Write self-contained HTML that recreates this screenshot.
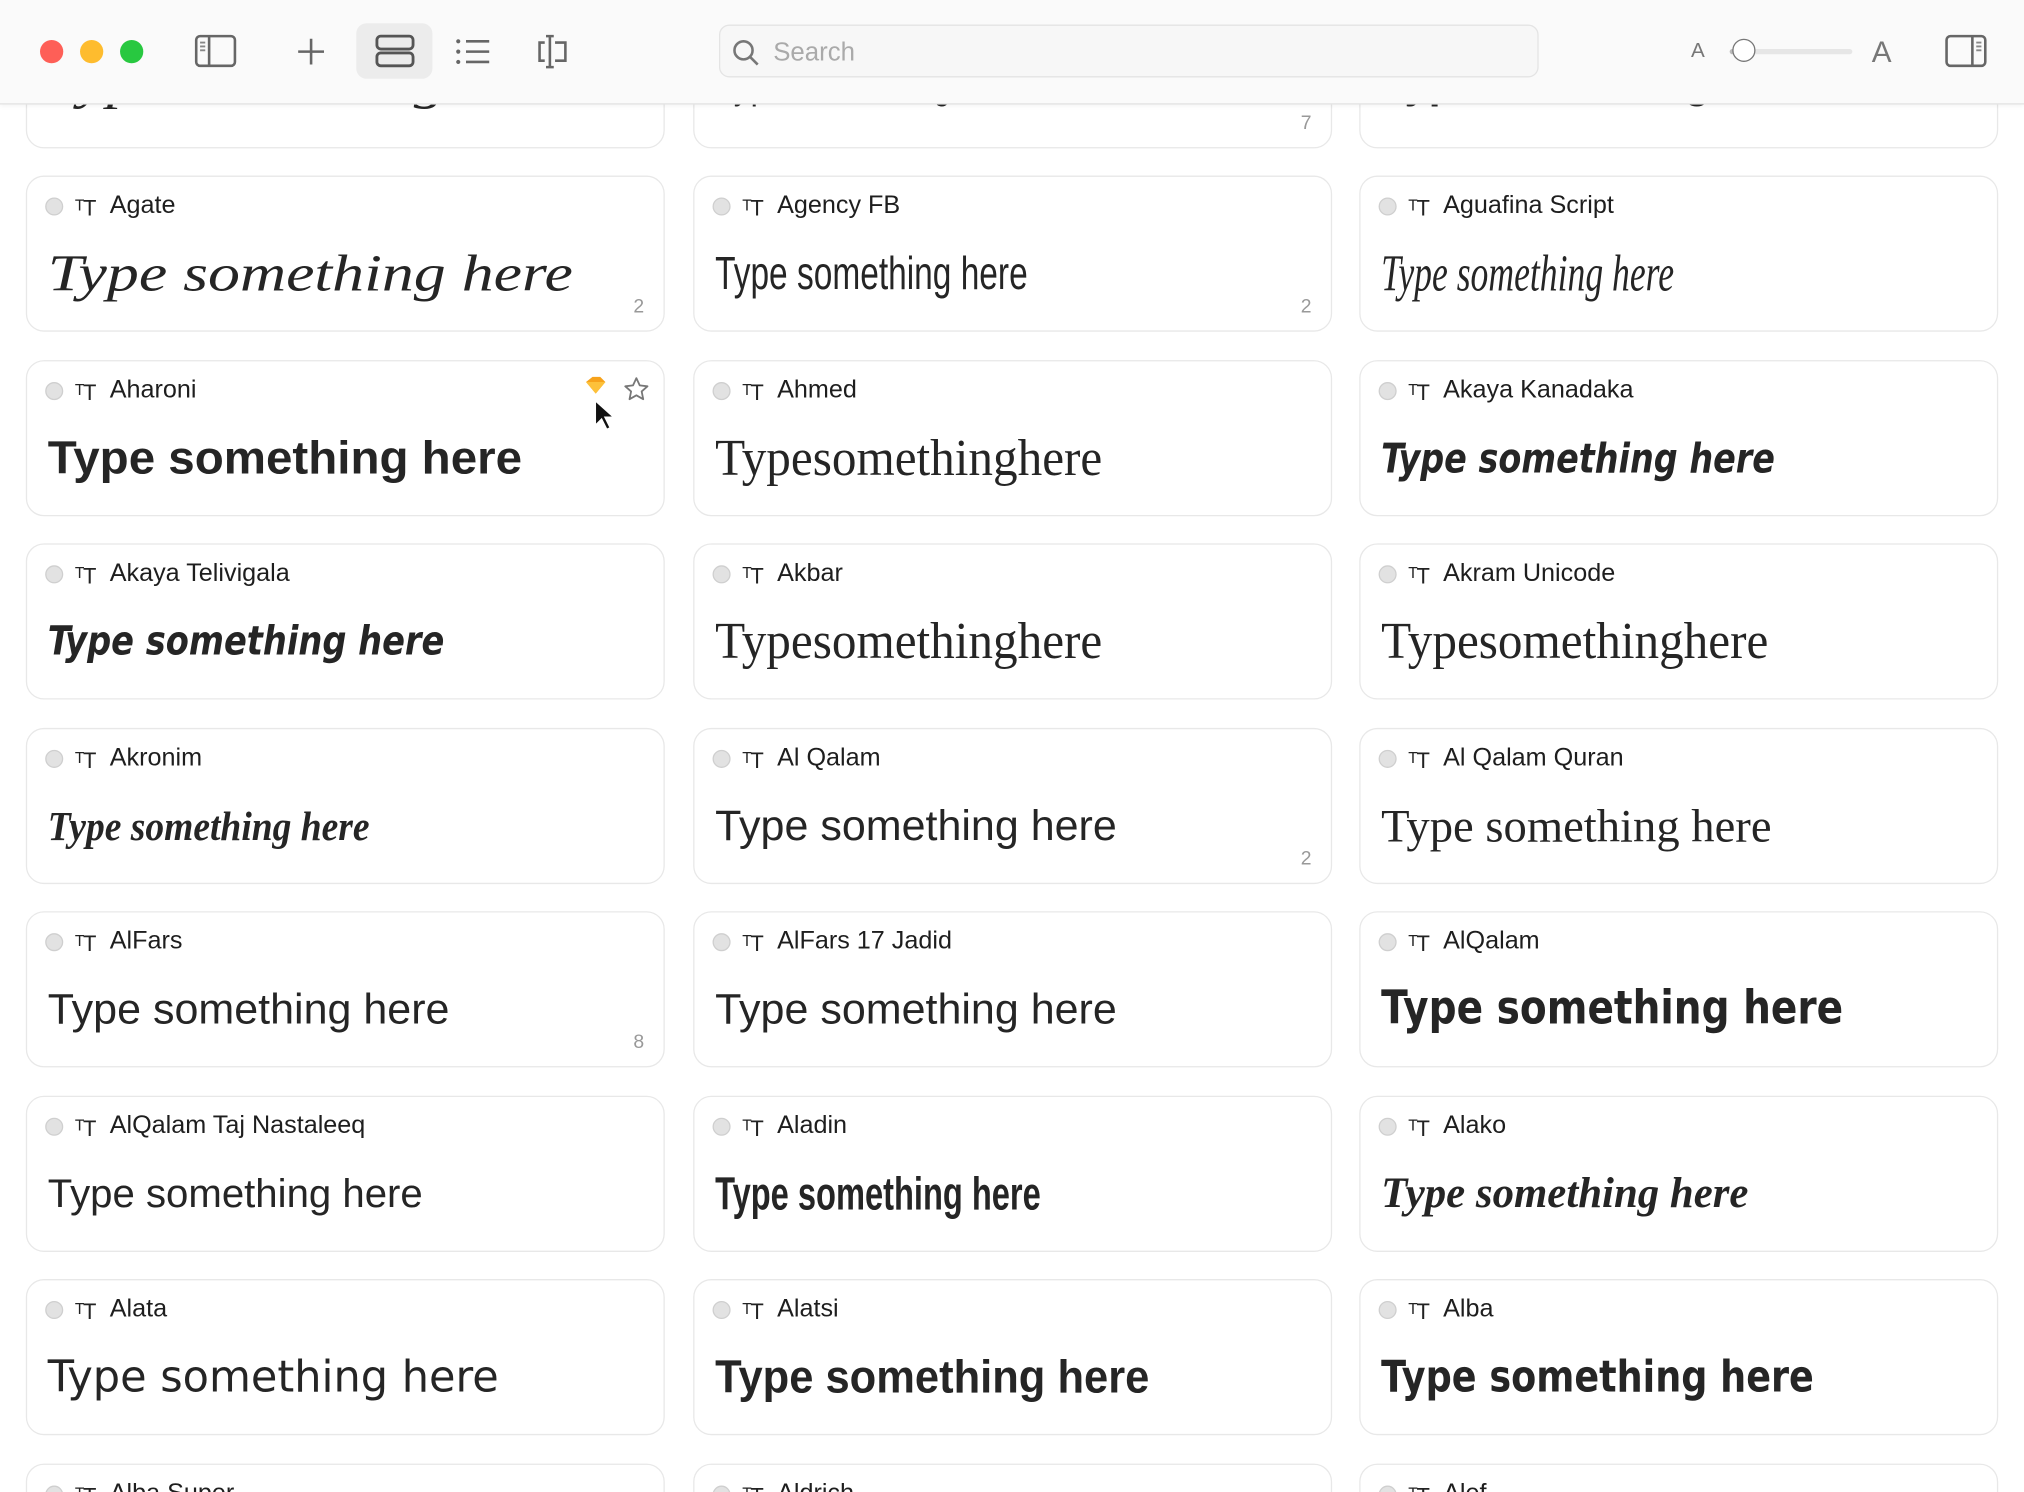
<!DOCTYPE html>
<html><head><meta charset="utf-8"><style>
html,body{margin:0;padding:0;width:2024px;height:1492px;overflow:hidden;background:#fff}
#w{position:absolute;left:0;top:0;width:1568px;height:1156px;transform:scale(1.29082,1.29066);transform-origin:0 0;overflow:hidden;font-family:"Liberation Sans",sans-serif}
.tb{position:absolute;left:0;top:0;width:1568px;height:80px;background:#fafafa;border-bottom:1px solid #e2e2e2;box-shadow:0 1px 4px rgba(0,0,0,.06);z-index:10}
.tl{position:absolute;top:31px;width:18px;height:18px;border-radius:50%}
.card{position:absolute;width:495px;height:121px;border:1px solid #e8e8e8;border-radius:14px;background:#fff;box-sizing:border-box}
.dot{position:absolute;left:14px;top:16px;width:14px;height:14px;border-radius:50%;background:#e2e2e2;border:1px solid #cfcfcf;box-sizing:border-box}
.ic{position:absolute;left:37px;top:12px;font-size:17px;color:#222;line-height:20px}
.ic b{font-weight:normal;font-size:12px;vertical-align:4px;margin-right:-1px}
.nm{position:absolute;left:64px;top:11px;font-size:19.5px;color:#1e1e1e}
.s{position:absolute;left:16px;top:50px;line-height:50px;white-space:nowrap;color:#252525;transform-origin:0 50%}
.n{position:absolute;right:15px;top:92px;font-size:15px;color:#999}
</style></head><body><div id="w">
<div class="tb">
<div class="tl" style="left:31px;background:#fe5f57;"></div>
<div class="tl" style="left:62px;background:#febc2e;"></div>
<div class="tl" style="left:93px;background:#28c840;"></div>
<svg style="position:absolute;left:150px;top:26px" width="34" height="28" viewBox="0 0 34 28"><rect x="2" y="2" width="30" height="23" rx="3" fill="none" stroke="#666" stroke-width="2"/><line x1="12" y1="2" x2="12" y2="25" stroke="#666" stroke-width="2"/><line x1="5" y1="7" x2="9" y2="7" stroke="#888" stroke-width="1.5"/><line x1="5" y1="10" x2="9" y2="10" stroke="#888" stroke-width="1.5"/><line x1="5" y1="13" x2="9" y2="13" stroke="#888" stroke-width="1.5"/></svg>
<svg style="position:absolute;left:229px;top:28px" width="24" height="24"><path d="M12 2v20M2 12h20" stroke="#666" stroke-width="2"/></svg>
<div style="position:absolute;left:276px;top:18px;width:59px;height:43px;border-radius:8px;background:#ececec"></div>
<svg style="position:absolute;left:290px;top:26px" width="32" height="28"><rect x="2" y="2" width="28" height="10" rx="3" fill="none" stroke="#555" stroke-width="2.2"/><rect x="2" y="15" width="28" height="10" rx="3" fill="none" stroke="#555" stroke-width="2.2"/></svg>
<svg style="position:absolute;left:352px;top:28px" width="30" height="24"><g fill="#666"><circle cx="3" cy="4" r="1.6"/><circle cx="3" cy="12" r="1.6"/><circle cx="3" cy="20" r="1.6"/></g><g stroke="#666" stroke-width="2"><path d="M9 4h18M9 12h18M9 20h18"/></g></svg>
<svg style="position:absolute;left:414px;top:26px" width="30" height="28"><path d="M12 2v24M9 2h6M9 26h6M8 7H4v14h4M16 7h8v14h-8" fill="none" stroke="#666" stroke-width="2"/></svg>
<div style="position:absolute;left:557px;top:19px;width:635px;height:41px;border:1px solid #e4e4e4;border-radius:8px;background:#f7f7f7;box-sizing:border-box"></div>
<svg style="position:absolute;left:567px;top:30px" width="22" height="22"><circle cx="9" cy="9" r="7" fill="none" stroke="#777" stroke-width="2"/><path d="M14 14l6 6" stroke="#777" stroke-width="2"/></svg>
<div style="position:absolute;left:599px;top:30px;font-size:20px;color:#aaa">Search</div>
<div style="position:absolute;left:1310px;top:31px;font-size:16px;color:#777">A</div>
<div style="position:absolute;left:1340px;top:38px;width:95px;height:4px;border-radius:2px;background:#e6e6e6"></div>
<div style="position:absolute;left:1340px;top:38px;width:12px;height:4px;border-radius:2px;background:#bbb"></div>
<div style="position:absolute;left:1342px;top:30px;width:18px;height:18px;border-radius:50%;background:#fff;border:1.5px solid #777;box-sizing:border-box"></div>
<div style="position:absolute;left:1450px;top:27px;font-size:23px;color:#777">A</div>
<svg style="position:absolute;left:1506px;top:26px" width="34" height="28"><rect x="2" y="2" width="30" height="23" rx="3" fill="none" stroke="#666" stroke-width="2"/><line x1="22" y1="2" x2="22" y2="25" stroke="#666" stroke-width="2"/><line x1="25" y1="7" x2="29" y2="7" stroke="#888" stroke-width="1.5"/><line x1="25" y1="10" x2="29" y2="10" stroke="#888" stroke-width="1.5"/><line x1="25" y1="13" x2="29" y2="13" stroke="#888" stroke-width="1.5"/></svg>
</div>

<div id="cards"></div>
<svg style="position:absolute;left:450px;top:290px;z-index:5" width="60" height="54"><path d="M4 6l5-4h6l4 4-7.5 9z" fill="#f7a21b"/><path d="M4 6h15L11.5 15z" fill="#fdc13a"/><path d="M11 20l0 20 5-5 4 8 3-1.5-4-8h7z" fill="#111" stroke="#fff" stroke-width="1.5"/><path d="M43 3l2.6 5.6 6 .7-4.5 4 1.2 6-5.3-3-5.3 3 1.2-6-4.5-4 6-.7z" fill="none" stroke="#777" stroke-width="1.4" stroke-linejoin="round"/></svg>
</div>
<script>
var D=[
["","","Liberation Serif","italic","normal",40,407,""],["","","Liberation Sans","normal","normal",36,242,"7"],["","","Liberation Sans","normal","bold",36,335,""],
["Agate","Type something here","Liberation Serif","italic","normal",40,407,"2"],["Agency FB","Type something here","Liberation Sans","normal","normal",36,242,"2"],["Aguafina Script","Type something here","Liberation Serif","italic","normal",40,227,""],
["Aharoni","Type something here","Liberation Sans","normal","bold",36,367,""],["Ahmed","Typesomethinghere","Liberation Serif","normal","normal",40,300,""],["Akaya Kanadaka","Type something here","DejaVu Sans","italic","bold",32,305,""],
["Akaya Telivigala","Type something here","DejaVu Sans","italic","bold",31,307,""],["Akbar","Typesomethinghere","Liberation Serif","normal","normal",40,300,""],["Akram Unicode","Typesomethinghere","Liberation Serif","normal","normal",40,300,""],
["Akronim","Type something here","Liberation Serif","italic","bold",32,249,""],["Al Qalam","Type something here","Liberation Sans","normal","normal",33,311,"2"],["Al Qalam Quran","Type something here","Liberation Serif","normal","normal",36,302,""],
["AlFars","Type something here","Liberation Sans","normal","normal",33,311,"8"],["AlFars 17 Jadid","Type something here","Liberation Sans","normal","normal",33,311,""],["AlQalam","Type something here","DejaVu Sans","normal","bold",36,358,""],
["AlQalam Taj Nastaleeq","Type something here","Liberation Sans","normal","normal",31,291,""],["Aladin","Type something here","Liberation Sans","normal","bold",36,252,""],["Alako","Type something here","Liberation Serif","italic","bold",34,285,""],
["Alata","Type something here","DejaVu Sans","normal","normal",34,349,""],["Alatsi","Type something here","Liberation Sans","normal","bold",36,336,""],["Alba","Type something here","DejaVu Sans","normal","bold",34,335,""],
["Alba Super","","Liberation Sans","normal","normal",34,300,""],["Aldrich","","Liberation Sans","normal","normal",34,300,""],["Alef","","Liberation Sans","normal","normal",34,300,""]];
var c=document.getElementById('cards'),h='',X=[20,537,1053];
D.forEach(function(d,i){var r=Math.floor(i/3),col=i%3,t=-6.5+r*142.5;
h+='<div class="card" style="left:'+X[col]+'px;top:'+t+'px">';
if(d[0])h+='<div class="dot"></div><div class="ic"><b>T</b>T</div><div class="nm">'+d[0]+'</div>';
else h+='<div class="dot"></div>';
h+='<div class="s" style="'+(r==0?'top:43px;':'')+'font-family:\''+d[2]+'\',sans-serif;font-style:'+d[3]+';font-weight:'+d[4]+';font-size:'+d[5]+'px" w="'+d[6]+'">'+(d[1]||'Type something here')+'</div>';
if(d[7])h+='<div class="n">'+d[7]+'</div>';h+='</div>';});
c.innerHTML=h;
document.querySelectorAll('.s').forEach(function(e){var w=+e.getAttribute('w');var o=e.offsetWidth;if(o)e.style.transform='scaleX('+(w/o)+')';});
</script>
</body></html>
